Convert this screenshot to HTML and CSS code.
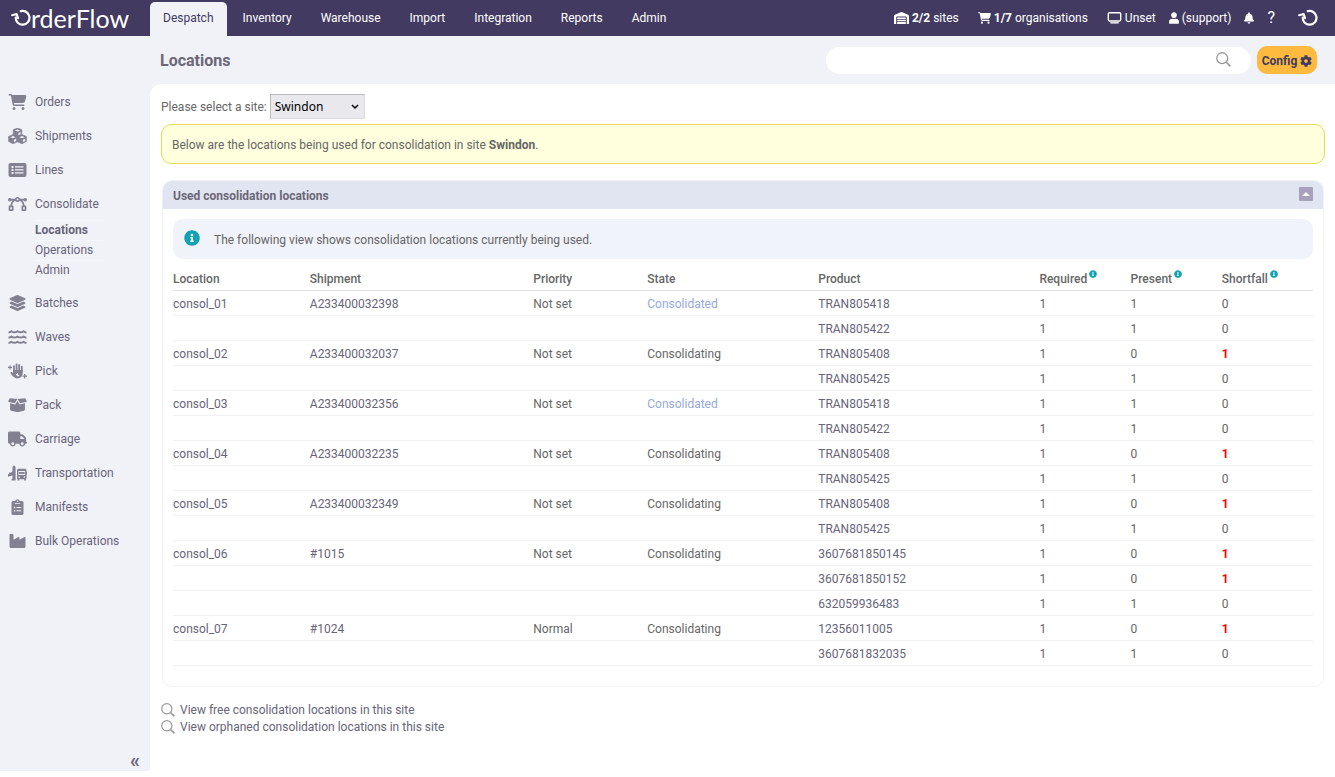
FILE: index.html
```html
<!DOCTYPE html>
<html lang="en">
<head>
  <meta charset="UTF-8">
  <title>OrderFlow - Locations</title>
  <meta name="viewport" content="width=device-width, initial-scale=1.0">
  <link rel="stylesheet" href="styles.css">
</head>
<body>

  <!-- icon sprite -->
  <svg class="sprite" aria-hidden="true">
    <symbol id="i-swirl" viewBox="0 0 20 20">
      <path d="M9.800 3.100A6.900 6.900 0 1 1 4.700 9.500" fill="none" stroke="currentColor" stroke-width="2.200" stroke-linecap="round"/>
      <path d="M1.200 7.200L5.600 6L7 10.200" fill="none" stroke="currentColor" stroke-width="2.200" stroke-linecap="round" stroke-linejoin="round"/>
    </symbol>
    <symbol id="i-cart" viewBox="0 0 576 512">
      <path d="M0 24C0 10.7 10.7 0 24 0H69.5c22 0 41.500 12.800 50.600 32h411c26.300 0 45.500 25 38.600 50.400l-41 152.300c-8.500 31.400-37 53.300-69.500 53.300H170.700l5.400 28.500c2.200 11.300 12.100 19.500 23.600 19.500H488c13.300 0 24 10.700 24 24s-10.700 24-24 24H199.700c-34.600 0-64.300-24.600-70.700-58.500L77.400 54.500c-.7-3.800-4-6.500-7.900-6.500H24C10.700 48 0 37.300 0 24zM128 464a48 48 0 1 1 96 0 48 48 0 1 1 -96 0zm336-48a48 48 0 1 1 0 96 48 48 0 1 1 0-96z"/>
    </symbol>
    <symbol id="i-warehouse" viewBox="0 0 640 512">
      <path fill-rule="evenodd" d="M0 488V171c0-26 16-50 40-59L308 4c8-3 16-3 24 0l268 108c24 9 40 33 40 59v317c0 13-11 24-24 24h-48c-13 0-24-11-24-24V224c0-18-14-32-32-32H128c-18 0-32 14-32 32v264c0 13-11 24-24 24H24c-13 0-24-11-24-24z"/>
      <path d="M136 232h368v62H136zM136 326h368v66H136zM136 424h368v88H136z"/>
    </symbol>
    <symbol id="i-screen" viewBox="0 0 15 13">
      <path d="M2 0.800h11a1.200 1.200 0 0 1 1.200 1.200v6.500a1.200 1.200 0 0 1-1.200 1.200H2a1.200 1.200 0 0 1-1.200-1.200V2A1.200 1.200 0 0 1 2 0.800z" fill="none" stroke="currentColor" stroke-width="1.500"/>
      <path d="M3 11h9v1.500H3z"/>
    </symbol>
    <symbol id="i-user" viewBox="0 0 448 512">
      <path d="M224 256c70.700 0 128-57.300 128-128S294.700 0 224 0 96 57.300 96 128s57.300 128 128 128zm89.600 32h-16.700c-22.200 10.200-46.900 16-72.900 16s-50.600-5.800-72.900-16h-16.700C60.200 288 0 348.200 0 422.400V464c0 26.500 21.500 48 48 48h352c26.500 0 48-21.500 48-48v-41.600c0-74.200-60.200-134.400-134.400-134.400z"/>
    </symbol>
    <symbol id="i-bell" viewBox="0 0 448 512">
      <path d="M224 512c35.320 0 63.970-28.650 63.970-64H160.030c0 35.350 28.650 64 63.970 64zm215.390-149.710c-19.320-20.760-55.470-51.990-55.470-154.290 0-77.700-54.480-139.900-127.940-155.160V32c0-17.670-14.320-32-31.980-32s-31.980 14.330-31.980 32v20.840C118.560 68.100 64.080 130.300 64.080 208c0 102.300-36.150 133.530-55.470 154.290-6 6.450-8.660 14.160-8.610 21.710.11 16.400 12.980 32 32.100 32h383.800c19.120 0 32-15.600 32.100-32 .05-7.550-2.610-15.270-8.610-21.710z"/>
    </symbol>
    <symbol id="i-cog" viewBox="0 0 512 512">
      <path d="M487.400 315.700l-42.600-24.600c4.300-23.200 4.300-47 0-70.200l42.600-24.600c4.900-2.800 7.100-8.600 5.500-14-11.100-35.600-30-67.800-54.700-94.600-3.800-4.100-10-5.100-14.800-2.300L380.800 110c-17.900-15.400-38.500-27.300-60.800-35.100V25.800c0-5.600-3.900-10.500-9.400-11.700-36.700-8.200-74.300-7.800-109.200 0-5.500 1.200-9.400 6.100-9.400 11.700V75c-22.200 7.900-42.800 19.800-60.800 35.100L88.700 85.500c-4.900-2.800-11-1.900-14.800 2.300-24.700 26.700-43.600 58.900-54.700 94.600-1.700 5.400.6 11.200 5.500 14L67.300 221c-4.300 23.200-4.300 47 0 70.200l-42.600 24.600c-4.900 2.800-7.100 8.600-5.500 14 11.100 35.600 30 67.800 54.700 94.600 3.800 4.100 10 5.100 14.800 2.300l42.600-24.600c17.900 15.400 38.500 27.300 60.800 35.100v49.200c0 5.600 3.900 10.500 9.400 11.700 36.700 8.200 74.300 7.800 109.200 0 5.500-1.200 9.400-6.100 9.400-11.700v-49.200c22.200-7.900 42.800-19.800 60.800-35.100l42.600 24.600c4.900 2.800 11 1.900 14.800-2.300 24.700-26.700 43.600-58.900 54.700-94.600 1.500-5.500-.7-11.300-5.600-14.100zM256 336c-44.100 0-80-35.900-80-80s35.900-80 80-80 80 35.900 80 80-35.900 80-80 80z"/>
    </symbol>
    <symbol id="i-info" viewBox="0 0 512 512">
      <path d="M256 8C119.043 8 8 119.083 8 256c0 136.997 111.043 248 248 248s248-111.003 248-248C504 119.083 392.957 8 256 8zm0 110c23.196 0 42 18.804 42 42s-18.804 42-42 42-42-18.804-42-42 18.804-42 42-42zm56 254c0 6.627-5.373 12-12 12h-88c-6.627 0-12-5.373-12-12v-24c0-6.627 5.373-12 12-12h12v-64h-12c-6.627 0-12-5.373-12-12v-24c0-6.627 5.373-12 12-12h64c6.627 0 12 5.373 12 12v100h12c6.627 0 12 5.373 12 12v24z"/>
    </symbol>
    <symbol id="i-search" viewBox="0 0 14 14">
      <circle cx="5.800" cy="5.800" r="5.100" fill="none" stroke="currentColor" stroke-width="1.200"/>
      <path d="M9.600 9.600L13.400 13.400" stroke="currentColor" stroke-width="1.500"/>
    </symbol>
    <symbol id="i-cubes" viewBox="0 0 19 16">
      <path d="M9.500 0l4.300 1.700v4.700l4.600 2v5L14 15.800l-4.500-2-4.500 2-4.400-2.400v-5l4.600-2V1.700z" stroke="currentColor" stroke-linejoin="round" stroke-width="0.600"/>
      <path d="M6.800 2.600l2.700-1 2.700 1-2.700 1zM10.400 5l2.200-0.900v2.200l-2.200 1zM2.300 9.200L5 8.100l2.600 1.100L5 10.300zM5.900 11.700l2.300-1v2.200l-2.300 1.200zM11.400 9.200L14 8.100l2.700 1.100L14 10.300zM14.900 11.700l2.300-1v2.200l-2.300 1.200z" fill="#f1f2f8"/>
    </symbol>
    <symbol id="i-lines" viewBox="0 0 18 14">
      <rect width="18" height="14" rx="2"/>
      <path d="M3 3h2v2H3zM3 6h2v2H3zM3 9h2v2H3zM6.500 3.300H15v1.300H6.500zM6.500 6.300H15v1.300H6.500zM6.500 9.300H15v1.300H6.500z" fill="#f1f2f8"/>
    </symbol>
    <symbol id="i-bezier" viewBox="0 0 20 15">
      <path d="M2 3h16M7.500 3C4.500 4.500 3.400 7 3.300 10M12.500 3c3 1.500 4.100 4 4.200 7" fill="none" stroke="currentColor" stroke-width="1.800"/>
      <circle cx="1.800" cy="3" r="1.800"/><circle cx="18.200" cy="3" r="1.800"/>
      <g fill="#f1f2f8" stroke="currentColor" stroke-width="1.700">
        <circle cx="10" cy="2.700" r="1.800"/>
        <rect x="1.500" y="10" width="3.500" height="4" rx="0.500"/>
        <rect x="15" y="10" width="3.500" height="4" rx="0.500"/>
      </g>
    </symbol>
    <symbol id="i-layers" viewBox="0 0 512 512">
      <path d="M12.410 148.020l232.940 105.670c6.800 3.090 14.490 3.090 21.290 0l232.940-105.670c16.550-7.510 16.550-32.520 0-40.030L266.650 2.310a25.607 25.607 0 0 0-21.290 0L12.410 107.980c-16.550 7.510-16.550 32.530 0 40.040zm487.180 88.280l-58.090-26.330-161.640 73.270c-7.560 3.430-15.590 5.170-23.860 5.170s-16.290-1.740-23.860-5.170L70.510 209.970l-58.100 26.330c-16.550 7.500-16.550 32.500 0 40l232.940 105.590c6.800 3.080 14.490 3.080 21.290 0L499.590 276.300c16.550-7.500 16.550-32.500 0-40zm0 127.800l-57.870-26.230-161.860 73.370c-7.560 3.430-15.590 5.170-23.860 5.170s-16.290-1.740-23.860-5.170L70.290 337.870 12.410 364.100c-16.550 7.500-16.550 32.500 0 40l232.940 105.590c6.800 3.080 14.490 3.080 21.290 0L499.590 404.100c16.550-7.500 16.550-32.500 0-40z"/>
    </symbol>
    <symbol id="i-waves" viewBox="0 0 18 13">
      <path d="M0.500 2.200q1.500-0.200 2.700-1.200q2.900 2 5.800 0q2.900 2 5.800 0q1.200 1 2.700 1.200M0.500 7.200q1.500-0.200 2.700-1.200q2.900 2 5.800 0q2.900 2 5.800 0q1.200 1 2.700 1.200M0.500 12.200q1.500-0.200 2.700-1.200q2.900 2 5.800 0q2.900 2 5.800 0q1.200 1 2.700 1.200" fill="none" stroke="currentColor" stroke-width="1.800"/>
    </symbol>
    <symbol id="i-hand" viewBox="0 0 20 16">
      <path d="M6.300 8.500V2.800M9 8V1M11.700 8V1.600M14.500 9V3.500" stroke="currentColor" stroke-width="1.900" stroke-linecap="round"/>
      <path d="M5.400 7h10v3.500a5.300 5.300 0 0 1-5.300 5.300c-2.600 0-4.300-1.500-7.300-5c-0.900-1.200 0.500-2.200 1.500-1.500l1.100 0.900z"/>
      <path d="M0 4.300h4.200M2.100 2.200v4.200M15.300 13.500h4.700M17.600 11.200v4.600" stroke="currentColor" stroke-width="1.300"/>
      <path d="M8.200 11.800l2-1.800 0.600 2.300 1.600 0.500-2.200 0.900z" fill="#f1f2f8"/>
    </symbol>
    <symbol id="i-box" viewBox="0 0 20 15">
      <path d="M1.800 0.300L10 1.200 7.200 5.500 0.600 4.200c-0.600-0.200-0.700-0.600-0.500-1zM18.200 0.300L10 1.200l2.800 4.300 6.600-1.300c0.600-0.200 0.700-0.600 0.500-1z"/>
      <path d="M2 5.700l5.600 1.200L10 3.300l2.400 3.600L18 5.700v6.500c0 0.800-0.400 1.200-1.100 1.400l-5.900 1.300h-2L3.100 13.600C2.400 13.400 2 13 2 12.200z"/>
    </symbol>
    <symbol id="i-truck" viewBox="0 0 640 512">
      <path d="M48 0C21.500 0 0 21.500 0 48V368c0 26.500 21.500 48 48 48H64c0 53 43 96 96 96s96-43 96-96H384c0 53 43 96 96 96s96-43 96-96h32c17.700 0 32-14.300 32-32s-14.300-32-32-32V288 256 237.300c0-17-6.700-33.300-18.700-45.300L512 114.700c-12-12-28.300-18.700-45.300-18.700H416V48c0-26.500-21.500-48-48-48H48zM416 160h50.700L544 237.300V256H416V160zM112 416a48 48 0 1 1 96 0 48 48 0 1 1 -96 0zm368-48a48 48 0 1 1 0 96 48 48 0 1 1 0-96z"/>
    </symbol>
    <symbol id="i-transport" viewBox="0 0 20 16">
      <path d="M6.300 0c1 0 1.700 1.300 1.700 2.600V16H3.700v-1.400l1-0.800V10.500L0 12V9.700l1-1V7.500h1.300V8l2.400-1.600V2.600C4.700 1.300 5.500 0 6.300 0z"/>
      <path d="M11.200 3.500h6.600c1 0 1.700 0.700 1.700 1.600v1.400l0.500 0.200v3l-0.500 0.200v4.200H19V16h-2v-1.300h-5V16h-2v-1.500L9.500 14V5.200c0-1 0.700-1.700 1.700-1.700z"/>
      <path d="M11 6h7v4h-7zM11 11.700h1.500v1.200H11zM16.500 11.700H18v1.200h-1.500z" fill="#f1f2f8"/>
      <path d="M11.500 7h6v2h-6z"/>
    </symbol>
    <symbol id="i-clipboard" viewBox="0 0 12 16">
      <path d="M1.500 2h2.200a2.400 2.400 0 0 1 4.600 0h2.200A1.500 1.500 0 0 1 12 3.500v11a1.500 1.500 0 0 1-1.500 1.500h-9A1.500 1.500 0 0 1 0 14.500v-11A1.500 1.500 0 0 1 1.500 2z"/>
      <circle cx="6" cy="2.300" r="0.800" fill="#f1f2f8"/>
      <path d="M3.300 4.200h5.400v0.900H3.300zM2.300 7.700h1.500v1.500H2.300zM2.300 11h1.500v1.500H2.300zM5 8h4.700v1H5zM5 11.300h4.700v1H5z" fill="#f1f2f8"/>
    </symbol>
    <symbol id="i-factory" viewBox="0 32 512 448">
      <path d="M32 32C14.300 32 0 46.300 0 64V304v48 80c0 26.500 21.500 48 48 48H464c26.500 0 48-21.500 48-48V304 152.200c0-18.200-19.400-29.700-35.400-21.100L320 215.400V152.200c0-18.200-19.400-29.700-35.400-21.100L128 215.400V64c0-17.700-14.300-32-32-32H32z"/>
    </symbol>
  </svg>

  <header class="topbar">
    <a class="logo" href="#"><svg class="logo-o"><use href="#i-swirl"/></svg><span>rderFlow</span></a>
    <nav class="tabs">
      <a class="tab active" href="#">Despatch</a>
      <a class="tab" href="#">Inventory</a>
      <a class="tab" href="#">Warehouse</a>
      <a class="tab" href="#">Import</a>
      <a class="tab" href="#">Integration</a>
      <a class="tab" href="#">Reports</a>
      <a class="tab" href="#">Admin</a>
    </nav>
    <div class="status">
      <a class="status-item wide" href="#"><svg class="w15"><use href="#i-warehouse"/></svg><span><b>2/2</b> sites</span></a>
      <a class="status-item wide" href="#"><svg class="w13"><use href="#i-cart"/></svg><span><b>1/7</b> organisations</span></a>
      <a class="status-item" href="#"><svg class="w15"><use href="#i-screen"/></svg><span>Unset</span></a>
      <a class="status-item" href="#"><svg class="w10"><use href="#i-user"/></svg><span>(support)</span></a>
      <a class="status-item" href="#" aria-label="Notifications"><svg class="w10"><use href="#i-bell"/></svg></a>
      <a class="status-item help" href="#">?</a>
      <a class="status-item" href="#" aria-label="Home"><svg class="w20"><use href="#i-swirl"/></svg></a>
    </div>
  </header>

  <div class="layout">
    <aside class="sidebar">
      <nav class="menu">
        <a class="menu-item" href="#"><svg><use href="#i-cart"/></svg>Orders</a>
        <a class="menu-item" href="#"><svg><use href="#i-cubes"/></svg>Shipments</a>
        <a class="menu-item" href="#"><svg class="small"><use href="#i-lines"/></svg>Lines</a>
        <a class="menu-item" href="#"><svg><use href="#i-bezier"/></svg>Consolidate</a>
        <div class="submenu">
          <a class="current" href="#">Locations</a>
          <a href="#">Operations</a>
          <a href="#">Admin</a>
        </div>
        <a class="menu-item" href="#"><svg><use href="#i-layers"/></svg>Batches</a>
        <a class="menu-item" href="#"><svg class="small"><use href="#i-waves"/></svg>Waves</a>
        <a class="menu-item" href="#"><svg><use href="#i-hand"/></svg>Pick</a>
        <a class="menu-item" href="#"><svg class="small"><use href="#i-box"/></svg>Pack</a>
        <a class="menu-item" href="#"><svg><use href="#i-truck"/></svg>Carriage</a>
        <a class="menu-item" href="#"><svg><use href="#i-transport"/></svg>Transportation</a>
        <a class="menu-item" href="#"><svg><use href="#i-clipboard"/></svg>Manifests</a>
        <a class="menu-item" href="#"><svg class="small"><use href="#i-factory"/></svg>Bulk Operations</a>
      </nav>
      <button class="collapse" type="button" aria-label="Collapse menu">«</button>
    </aside>

    <div class="page">
      <div class="page-head">
        <h1>Locations</h1>
        <form class="search">
          <input type="search" aria-label="Search">
          <button type="button" aria-label="Search"><svg><use href="#i-search"/></svg></button>
        </form>
        <button class="config" type="button">Config <svg><use href="#i-cog"/></svg></button>
      </div>

      <main class="content">
        <div class="site-select">
          <label for="site">Please select a site:</label>
          <select id="site">
            <option>Swindon</option>
          </select>
        </div>

        <p class="notice">Below are the locations being used for consolidation in site <b>Swindon</b>.</p>

        <section class="panel">
          <div class="panel-head">
            <h2>Used consolidation locations</h2>
            <button class="toggle" type="button" aria-label="Toggle panel"></button>
          </div>
          <div class="panel-body">
            <p class="info"><svg><use href="#i-info"/></svg>The following view shows consolidation locations currently being used.</p>
            <table class="locations">
              <colgroup>
                <col class="c-location"><col class="c-shipment"><col class="c-priority"><col class="c-state">
                <col class="c-product"><col class="c-count"><col class="c-count"><col class="c-count">
              </colgroup>
              <thead>
                <tr>
                  <th>Location</th><th>Shipment</th><th>Priority</th><th>State</th><th>Product</th>
                  <th>Required<svg><use href="#i-info"/></svg></th>
                  <th>Present<svg><use href="#i-info"/></svg></th>
                  <th>Shortfall<svg><use href="#i-info"/></svg></th>
                </tr>
              </thead>
              <tbody>
                <tr><td><a href="#">consol_01</a></td><td><a href="#">A233400032398</a></td><td>Not set</td><td class="done">Consolidated</td><td><a href="#">TRAN805418</a></td><td>1</td><td>1</td><td>0</td></tr>
                <tr><td></td><td></td><td></td><td></td><td><a href="#">TRAN805422</a></td><td>1</td><td>1</td><td>0</td></tr>
                <tr><td><a href="#">consol_02</a></td><td><a href="#">A233400032037</a></td><td>Not set</td><td>Consolidating</td><td><a href="#">TRAN805408</a></td><td>1</td><td>0</td><td class="short">1</td></tr>
                <tr><td></td><td></td><td></td><td></td><td><a href="#">TRAN805425</a></td><td>1</td><td>1</td><td>0</td></tr>
                <tr><td><a href="#">consol_03</a></td><td><a href="#">A233400032356</a></td><td>Not set</td><td class="done">Consolidated</td><td><a href="#">TRAN805418</a></td><td>1</td><td>1</td><td>0</td></tr>
                <tr><td></td><td></td><td></td><td></td><td><a href="#">TRAN805422</a></td><td>1</td><td>1</td><td>0</td></tr>
                <tr><td><a href="#">consol_04</a></td><td><a href="#">A233400032235</a></td><td>Not set</td><td>Consolidating</td><td><a href="#">TRAN805408</a></td><td>1</td><td>0</td><td class="short">1</td></tr>
                <tr><td></td><td></td><td></td><td></td><td><a href="#">TRAN805425</a></td><td>1</td><td>1</td><td>0</td></tr>
                <tr><td><a href="#">consol_05</a></td><td><a href="#">A233400032349</a></td><td>Not set</td><td>Consolidating</td><td><a href="#">TRAN805408</a></td><td>1</td><td>0</td><td class="short">1</td></tr>
                <tr><td></td><td></td><td></td><td></td><td><a href="#">TRAN805425</a></td><td>1</td><td>1</td><td>0</td></tr>
                <tr><td><a href="#">consol_06</a></td><td><a href="#">#1015</a></td><td>Not set</td><td>Consolidating</td><td><a href="#">3607681850145</a></td><td>1</td><td>0</td><td class="short">1</td></tr>
                <tr><td></td><td></td><td></td><td></td><td><a href="#">3607681850152</a></td><td>1</td><td>0</td><td class="short">1</td></tr>
                <tr><td></td><td></td><td></td><td></td><td><a href="#">632059936483</a></td><td>1</td><td>1</td><td>0</td></tr>
                <tr><td><a href="#">consol_07</a></td><td><a href="#">#1024</a></td><td>Normal</td><td>Consolidating</td><td><a href="#">12356011005</a></td><td>1</td><td>0</td><td class="short">1</td></tr>
                <tr><td></td><td></td><td></td><td></td><td><a href="#">3607681832035</a></td><td>1</td><td>1</td><td>0</td></tr>
              </tbody>
            </table>
          </div>
        </section>

        <div class="links">
          <a href="#"><svg><use href="#i-search"/></svg>View free consolidation locations in this site</a>
          <a href="#"><svg><use href="#i-search"/></svg>View orphaned consolidation locations in this site</a>
        </div>
      </main>
    </div>
  </div>

</body>
</html>
```
FILE: styles.css
```css
* {
  box-sizing: border-box;
}
body {
  margin: 0;
  min-height: 100vh;
  padding-bottom: 6px;
  display: flex;
  flex-direction: column;
  background: #fff;
  color: #666;
  font-family: Roboto, "Liberation Sans", sans-serif;
  font-size: 12px;
  line-height: 16px;
}
a {
  color: #686478;
  text-decoration: none;
}
svg {
  fill: currentColor;
  flex-shrink: 0;
}
button {
  font-family: inherit;
  border: none;
  cursor: pointer;
}
.sprite {
  position: absolute;
  width: 0;
  height: 0;
}

/* top bar */
.topbar {
  display: flex;
  height: 36px;
  background: #423a60;
}
.topbar a {
  color: #fff;
}
.logo {
  display: flex;
  align-items: center;
  width: 150px;
  padding-left: 11px;
  font-family: Lato, sans-serif;
  font-size: 25px;
  line-height: 36px;
}
.logo-o {
  width: 20px;
  height: 20px;
}
.tabs {
  display: flex;
  gap: 3px;
  padding-top: 2px;
}
.tab {
  padding: 0 13px;
  line-height: 32px;
  border-radius: 5px 5px 0 0;
}
.topbar .tab.active {
  background: #f1f2f8;
  color: #423a60;
}
.status {
  display: flex;
  align-items: center;
  gap: 13px;
  margin-left: auto;
  padding-right: 17px;
}
.status-item {
  display: flex;
  align-items: center;
  gap: 3px;
}
.status-item.wide {
  margin-right: 6px;
}
.status svg {
  height: 12px;
}
.status .w10 {
  width: 10px;
}
.status .w13 {
  width: 13px;
}
.status .w15 {
  width: 15px;
}
.status .w20 {
  width: 20px;
  height: 20px;
  margin-left: 10px;
}
.status-item.help {
  font-size: 16px;
}

/* sidebar */
.layout {
  display: flex;
  flex: 1;
  background: #f1f2f8;
}
.sidebar {
  display: flex;
  flex-direction: column;
  justify-content: space-between;
  width: 150px;
  padding-top: 49px;
}
.menu-item {
  display: flex;
  align-items: center;
  gap: 8px;
  height: 34px;
  padding-left: 8px;
}
.menu-item svg {
  width: 19px;
  height: 16px;
  color: #838090;
}
.menu-item svg.small {
  height: 14px;
}
.submenu {
  display: flex;
  flex-direction: column;
  width: 68px;
  margin: -1px 0 0 35px;
  padding-bottom: 6px;
}
.submenu a {
  height: 20px;
  line-height: 19px;
  border-top: 1px solid #f6f7fb;
}
.submenu .current {
  font-weight: bold;
}
.collapse {
  align-self: flex-end;
  padding: 0 10px 0 0;
  background: none;
  color: #686478;
  font-size: 20px;
  font-weight: bold;
  line-height: 22px;
}

/* page header */
.page {
  flex: 1;
  display: flex;
  flex-direction: column;
}
.page-head {
  display: flex;
  align-items: center;
  height: 48px;
  padding: 0 18px 0 10px;
}
.page-head h1 {
  flex: 1;
  margin: 0;
  padding-top: 2px;
  color: #6b6777;
  font-size: 16px;
  line-height: 20px;
}
.search {
  display: flex;
  align-items: center;
  width: 425px;
  height: 27px;
  margin-right: 6px;
  padding: 0 20px;
  border-radius: 14px;
  background: #fff;
}
.search input {
  flex: 1;
  border: none;
  outline: none;
  background: none;
}
.search button {
  display: flex;
  padding: 0 0 2px;
  background: none;
  color: #999;
}
.search svg {
  width: 15px;
  height: 15px;
}
.config {
  display: flex;
  align-items: center;
  justify-content: center;
  gap: 3px;
  width: 60px;
  height: 28px;
  padding: 2px 0 0;
  border-radius: 10px;
  background: #fdba3f;
  color: #423a60;
  font-size: 12px;
  font-weight: bold;
}
.config svg {
  width: 12px;
  height: 12px;
}

/* content */
.content {
  flex: 1;
  padding: 10px 10px 0 11px;
  border-top-left-radius: 12px;
  background: #fff;
}
.site-select {
  display: flex;
  align-items: center;
  gap: 3px;
}
.site-select select {
  appearance: none;
  width: 95px;
  height: 25px;
  padding: 0 4px;
  border: 1px solid #bbb;
  border-right-color: #ddd;
  border-bottom-color: #ddd;
  border-radius: 0;
  background: #e9e8ed url("data:image/svg+xml,%3Csvg xmlns='http://www.w3.org/2000/svg' width='8' height='6'%3E%3Cpath d='M1 1l3 3 3-3' fill='none' stroke='black' stroke-width='1.500'/%3E%3C/svg%3E") no-repeat right 5px center;
  color: #000;
  font-family: "Noto Sans", sans-serif;
  font-size: 12px;
}
.notice {
  margin: 5px 0 16px;
  padding: 12px 10px 10px;
  border: 1px solid #e5dc5b;
  border-radius: 10px;
  background: #fffedd;
}
.panel {
  margin: 0 1px;
  border: 1px solid #f1f2f8;
  border-radius: 10px;
  overflow: hidden;
}
.panel-head {
  display: flex;
  align-items: center;
  justify-content: space-between;
  height: 28px;
  padding: 0 10px;
  background: #e1e5f1;
}
.panel-head h2 {
  margin: 0;
  padding-top: 2px;
  color: #6b6777;
  font-size: 12px;
}
.toggle {
  display: flex;
  align-items: center;
  justify-content: center;
  width: 14px;
  height: 14px;
  margin-bottom: 2px;
  padding: 0;
  border-radius: 1px;
  background: #a7a1bb;
}
.toggle::before {
  content: "";
  border: 4px solid transparent;
  border-top: none;
  border-bottom-color: #fff;
}
.panel-body {
  padding: 10px 10px 20px;
}
.info {
  display: flex;
  align-items: center;
  gap: 14px;
  height: 40px;
  margin: 0 0 7px;
  padding: 2px 11px 0;
  border-radius: 10px;
  background: #f0f3f9;
}
.info svg {
  width: 16px;
  height: 16px;
  margin-bottom: 4px;
}
.info svg,
th svg {
  color: #13a3b0;
}
.locations {
  width: 100%;
  table-layout: fixed;
  border-collapse: collapse;
}
.c-location {
  width: 12%;
}
.c-shipment {
  width: 19.6%;
}
.c-priority {
  width: 10%;
}
.c-state {
  width: 15%;
}
.c-product {
  width: 19.4%;
}
.c-count {
  width: 8%;
}
th,
td {
  height: 25px;
  padding: 2px 0 0;
  border-bottom: 1px solid #f0f1f6;
  text-align: left;
}
th {
  height: 24px;
  padding-top: 4px;
  border-bottom-color: #dfe2ee;
  font-weight: 500;
  vertical-align: baseline;
}
th svg {
  width: 8px;
  height: 8px;
  margin-left: 2px;
  vertical-align: 5px;
}
.done {
  color: #93a9dd;
}
.short {
  color: #f00;
  font-weight: bold;
}
.links {
  display: flex;
  flex-direction: column;
  gap: 1px;
  margin-top: 15px;
}
.links a {
  display: flex;
  align-items: center;
  gap: 5px;
}
.links svg {
  width: 14px;
  height: 14px;
  color: #999;
}
```
